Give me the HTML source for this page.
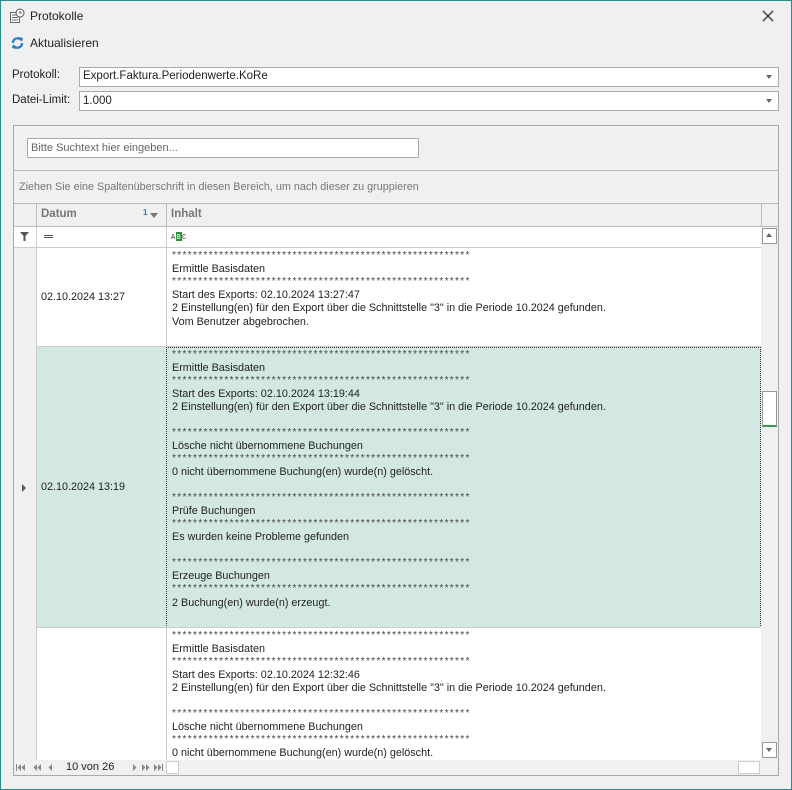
<!DOCTYPE html>
<html><head><meta charset="utf-8"><style>
*{box-sizing:border-box;margin:0;padding:0}
body{width:792px;height:790px;background:#f0f0f0;font-family:"Liberation Sans",sans-serif;font-size:12px;color:#222;position:relative;overflow:hidden;box-shadow:inset 0 0 0 1px #2a8d8d}
.a{position:absolute;white-space:nowrap}
.box{position:absolute;background:#fff;border:1px solid #a9a9a9}
.t{position:absolute;font-size:10.8px;white-space:nowrap;line-height:13px}
.s{position:absolute;font-size:10px;letter-spacing:1.35px;white-space:nowrap;overflow:hidden;width:302px;height:8px;line-height:10px;color:#444}
.dd{position:absolute;right:6px;top:7px;border-left:3.5px solid transparent;border-right:3.5px solid transparent;border-top:4px solid #666}
.nv{position:absolute;font-family:"DejaVu Sans",sans-serif;font-size:8px;color:#777;top:762px;line-height:10px}
</style></head><body>
<svg class="a" style="left:9px;top:8px" width="16" height="16" viewBox="0 0 16 16"><rect x="1.5" y="4.5" width="9" height="10" fill="#fff" stroke="#666"/><path d="M3 7h6M3 9.5h6M3 12h6" stroke="#666"/><circle cx="11" cy="5" r="4" fill="#fff" stroke="#555"/><path d="M11 3v2h2" stroke="#555" fill="none"/></svg>
<div class="a" style="left:30px;top:9px;font-size:12px">Protokolle</div>
<svg class="a" style="left:762px;top:10px" width="12" height="12"><path d="M1 1L11 11M11 1L1 11" stroke="#333" stroke-width="1.3"/></svg>
<svg class="a" style="left:11px;top:36px" width="13" height="14" viewBox="0 0 13 14"><path d="M2 7a4.5 4.5 0 0 1 8-3" stroke="#2f7fc4" stroke-width="2.3" fill="none"/><path d="M11 7a4.5 4.5 0 0 1-8 3" stroke="#2f7fc4" stroke-width="2.3" fill="none"/><path d="M8 1l4 1-1 4z" fill="#2f7fc4"/><path d="M5 13l-4-1 1-4z" fill="#2f7fc4"/></svg>
<div class="a" style="left:30px;top:36px;font-size:12px">Aktualisieren</div>
<div class="a" style="left:12px;top:69px;font-size:11.5px">Protokoll:</div>
<div class="box" style="left:79px;top:67px;width:700px;height:20px"><div class="a" style="left:3px;top:2px;font-size:11.5px">Export.Faktura.Periodenwerte.KoRe</div><div class="dd"></div></div>
<div class="a" style="left:12px;top:94px;font-size:11.5px">Datei-Limit:</div>
<div class="box" style="left:79px;top:91px;width:700px;height:20px"><div class="a" style="left:3px;top:3px;font-size:11.5px">1.000</div><div class="dd"></div></div>

<div class="a" style="left:13px;top:125px;width:766px;height:651px;border:1px solid #a9a9a9;background:#f0f0f0"></div>
<div class="box" style="left:27px;top:138px;width:392px;height:20px"><div class="a" style="left:3px;top:3px;font-size:11px;color:#666">Bitte Suchtext hier eingeben...</div></div>
<div class="a" style="left:14px;top:170px;width:764px;height:1px;background:#bbb"></div>
<div class="a" style="left:19px;top:181px;font-size:10.8px;color:#777">Ziehen Sie eine Spaltenüberschrift in diesen Bereich, um nach dieser zu gruppieren</div>
<div class="a" style="left:14px;top:203px;width:764px;height:1px;background:#bbb"></div>
<div class="a" style="left:36px;top:204px;width:1px;height:23px;background:#bbb"></div>
<div class="a" style="left:166px;top:204px;width:1px;height:23px;background:#bbb"></div>
<div class="a" style="left:761px;top:204px;width:1px;height:23px;background:#bbb"></div>
<div class="a" style="left:41px;top:208px;font-weight:bold;font-size:11.5px;color:#777">Datum</div>
<div class="a" style="left:143px;top:208px;font-size:8px;color:#3a6fb5;font-weight:bold">1</div>
<div class="a" style="left:150px;top:213px;border-left:4px solid transparent;border-right:4px solid transparent;border-top:5px solid #777"></div>
<div class="a" style="left:171px;top:208px;font-weight:bold;font-size:11.5px;color:#777">Inhalt</div>
<div class="a" style="left:14px;top:226px;width:764px;height:1px;background:#bbb"></div>
<div class="a" style="left:14px;top:227px;width:747px;height:20px;background:#fff"></div>
<div class="a" style="left:36px;top:227px;width:1px;height:20px;background:#ccc"></div>
<div class="a" style="left:166px;top:227px;width:1px;height:20px;background:#ccc"></div>
<svg class="a" style="left:20px;top:232px" width="10" height="9"><path d="M0 0h9L5.5 4v5h-2V4z" fill="#555"/></svg>
<div class="a" style="left:44px;top:235px;width:9px;height:1px;background:#555;box-shadow:0 2px 0 #555"></div>
<svg class="a" style="left:171px;top:232px" width="16" height="9"><text x="0" y="7" font-family="Liberation Mono" font-size="7" fill="#333">A</text><rect x="5" y="0" width="6" height="9" fill="#2f8f3f"/><text x="5.5" y="7" font-family="Liberation Mono" font-size="7" fill="#fff">B</text><text x="11" y="7" font-family="Liberation Mono" font-size="7" fill="#333">C</text></svg>
<div class="a" style="left:14px;top:247px;width:747px;height:1px;background:#ccc"></div>
<div class="a" style="left:14px;top:248px;width:747px;height:512px;background:#fff"></div>
<div class="a" style="left:14px;top:248px;width:22px;height:512px;background:#f0f0f0"></div>
<div class="a" style="left:36px;top:248px;width:1px;height:512px;background:#ccc"></div>
<div class="a" style="left:166px;top:248px;width:1px;height:512px;background:#ccc"></div>
<div class="a" style="left:37px;top:346px;width:724px;height:1px;background:#ccc"></div>
<div class="a" style="left:37px;top:347px;width:724px;height:280px;background:#d3e8e3"></div>
<div class="a" style="left:166px;top:347px;width:595px;height:281px;border:1px dotted #333"></div>
<div class="a" style="left:37px;top:627px;width:724px;height:1px;background:#ccc"></div>
<div class="a" style="left:22px;top:484px;border-top:4px solid transparent;border-bottom:4px solid transparent;border-left:4px solid #555"></div>
<div class="a" style="left:41px;top:291px;font-size:10.8px">02.10.2024 13:27</div>
<div class="a" style="left:41px;top:481px;font-size:10.8px">02.10.2024 13:19</div>

<div class="s" style="left:172px;top:251px">*********************************************************</div>
<div class="t" style="left:172px;top:263px">Ermittle Basisdaten</div>
<div class="s" style="left:172px;top:277px">*********************************************************</div>
<div class="t" style="left:172px;top:289px">Start des Exports: 02.10.2024 13:27:47</div>
<div class="t" style="left:172px;top:302px">2 Einstellung(en) für den Export über die Schnittstelle "3" in die Periode 10.2024 gefunden.</div>
<div class="t" style="left:172px;top:316px">Vom Benutzer abgebrochen.</div>

<div class="s" style="left:172px;top:350px">*********************************************************</div>
<div class="t" style="left:172px;top:362px">Ermittle Basisdaten</div>
<div class="s" style="left:172px;top:376px">*********************************************************</div>
<div class="t" style="left:172px;top:388px">Start des Exports: 02.10.2024 13:19:44</div>
<div class="t" style="left:172px;top:401px">2 Einstellung(en) für den Export über die Schnittstelle "3" in die Periode 10.2024 gefunden.</div>
<div class="s" style="left:172px;top:428px">*********************************************************</div>
<div class="t" style="left:172px;top:440px">Lösche nicht übernommene Buchungen</div>
<div class="s" style="left:172px;top:454px">*********************************************************</div>
<div class="t" style="left:172px;top:466px">0 nicht übernommene Buchung(en) wurde(n) gelöscht.</div>
<div class="s" style="left:172px;top:493px">*********************************************************</div>
<div class="t" style="left:172px;top:505px">Prüfe Buchungen</div>
<div class="s" style="left:172px;top:519px">*********************************************************</div>
<div class="t" style="left:172px;top:531px">Es wurden keine Probleme gefunden</div>
<div class="s" style="left:172px;top:558px">*********************************************************</div>
<div class="t" style="left:172px;top:570px">Erzeuge Buchungen</div>
<div class="s" style="left:172px;top:584px">*********************************************************</div>
<div class="t" style="left:172px;top:597px">2 Buchung(en) wurde(n) erzeugt.</div>

<div class="s" style="left:172px;top:631px">*********************************************************</div>
<div class="t" style="left:172px;top:643px">Ermittle Basisdaten</div>
<div class="s" style="left:172px;top:657px">*********************************************************</div>
<div class="t" style="left:172px;top:669px">Start des Exports: 02.10.2024 12:32:46</div>
<div class="t" style="left:172px;top:682px">2 Einstellung(en) für den Export über die Schnittstelle "3" in die Periode 10.2024 gefunden.</div>
<div class="s" style="left:172px;top:709px">*********************************************************</div>
<div class="t" style="left:172px;top:721px">Lösche nicht übernommene Buchungen</div>
<div class="s" style="left:172px;top:735px">*********************************************************</div>
<div class="t" style="left:172px;top:747px">0 nicht übernommene Buchung(en) wurde(n) gelöscht.</div>

<div class="a" style="left:761px;top:227px;width:17px;height:533px;background:#f0f0f0"></div>
<div class="a" style="left:762px;top:228px;width:15px;height:16px;border:1px solid #999;background:#fff"></div>
<div class="a" style="left:766px;top:233px;border-left:3px solid transparent;border-right:3px solid transparent;border-bottom:4px solid #666"></div>
<div class="a" style="left:762px;top:391px;width:15px;height:36px;border:1px solid #999;background:#fff;border-bottom:2px solid #3d9a5b"></div>
<div class="a" style="left:762px;top:742px;width:15px;height:16px;border:1px solid #999;background:#fff"></div>
<div class="a" style="left:766px;top:748px;border-left:3px solid transparent;border-right:3px solid transparent;border-top:4px solid #666"></div>
<div class="a" style="left:14px;top:760px;width:764px;height:15px;background:#f0f0f0"></div>
<svg class="a" style="left:16px;top:764px" width="150" height="8"><g fill="#888"><rect x="0" y="0" width="1" height="7"/><path d="M5 0v7L1.5 3.5zM9 0v7L5.5 3.5z"/><path d="M21 0v7L17.5 3.5zM25 0v7L21.5 3.5z"/><path d="M36 0v7L32.5 3.5z"/><path d="M117 0v7l3.5-3.5z"/><path d="M126 0v7l3.5-3.5zM130 0v7l3.5-3.5z"/><path d="M138 0v7l3.5-3.5zM142 0v7l3.5-3.5z"/><rect x="146" y="0" width="1" height="7"/></g></svg>
<div class="a" style="left:66px;top:761px;font-size:11px">10 von 26</div>
<div class="a" style="left:166px;top:761px;width:13px;height:13px;border:1px solid #ccc;background:#fff"></div>
<div class="a" style="left:738px;top:761px;width:22px;height:13px;border:1px solid #ccc;background:#fff"></div>
</body></html>
